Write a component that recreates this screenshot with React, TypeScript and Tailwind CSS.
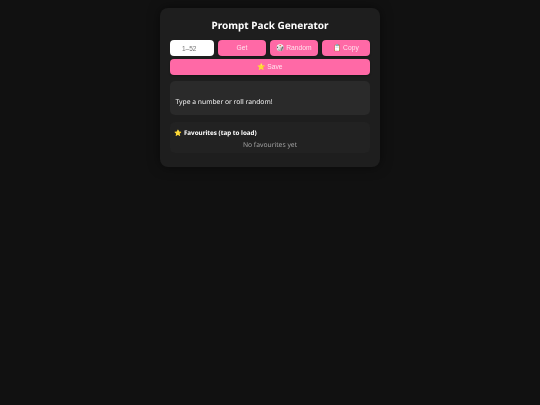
const btn = "flex-1 h-[16px] rounded-[4px] bg-[#ff69a6] text-[#ffe3ee] text-[6.7px] leading-none flex items-center justify-center font-['Liberation_Sans',sans-serif] shadow-[0_1px_2px_rgba(0,0,0,0.3)]";

export default function App() {
  return (
    <div className="min-h-[405px] bg-[#111111] flex justify-center items-start pt-[8px] font-['Noto_Sans','Open_Sans',sans-serif] [text-rendering:geometricPrecision]">
      <div className="w-[220px] h-[159px] rounded-[8px] bg-[#1e1e1e] px-[10px] pt-[10px] shadow-[0_0_12px_rgba(0,0,0,0.5)] will-change-transform">
        <h1 className="text-[10px] leading-[15px] font-bold text-white text-center">Prompt Pack Generator</h1>
        <div className="flex gap-[4px] mt-[7px]">
          <input
            placeholder="1–52"
            className="w-[44px] h-[16px] rounded-[4px] bg-white pl-[12px] text-[6.5px] text-[#555] placeholder:text-[#757575] font-['Liberation_Sans',sans-serif] outline-none"
          />
          <button className={btn}>Get</button>
          <button className={btn}>🎲 Random</button>
          <button className={btn}>📋 Copy</button>
        </div>
        <button className={btn + " w-full mt-[3px]"}>⭐ Save</button>
        <div className="mt-[6px] h-[34px] rounded-[5px] bg-[#2a2a2a] px-[5.5px] flex items-end pb-[8px]">
          <p className="text-[6.75px] leading-[11px] text-[#f2f2f2]">Type a number or roll random!</p>
        </div>
        <div className="mt-[7px] h-[31px] rounded-[5px] bg-[#222222] px-[4.5px] pt-[6px]">
          <h2 className="text-[6.27px] leading-[10px] font-bold text-white">⭐ Favourites (tap to load)</h2>
          <p className="text-[6.75px] leading-[11px] text-[#a0a0a0] text-center mt-[1px]">No favourites yet</p>
        </div>
      </div>
    </div>
  );
}
